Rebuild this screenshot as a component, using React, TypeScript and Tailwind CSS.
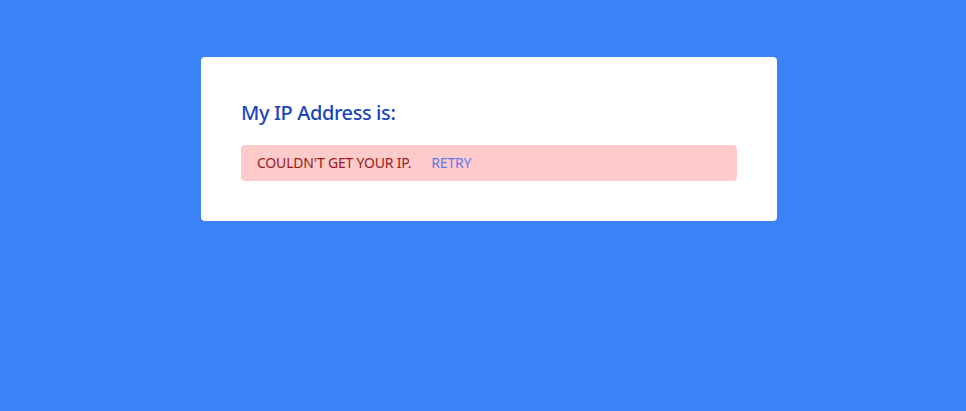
export default function App() {
  return (
    <div
      className="min-h-[411px] w-full bg-[#3b82f6] pl-3 pt-[57px]"
      style={{ fontFamily: '"Noto Sans", "Open Sans", sans-serif' }}
    >
      <div className="mx-auto w-[576px] rounded bg-white px-10 pt-[42px] pb-10">
        <h1 className="mb-[18px] text-xl leading-7 font-medium tracking-[-0.4px] text-[#2145b8]">My IP Address is:</h1>
        <div className="flex items-center rounded bg-[#fecaca] px-4 py-2 text-sm leading-5 uppercase tracking-[-0.2px]">
          <span className="text-[#991b1b]">Couldn't get your IP.</span>
          <button className="ml-5 uppercase text-[#6078f0]">Retry</button>
        </div>
      </div>
    </div>
  );
}
